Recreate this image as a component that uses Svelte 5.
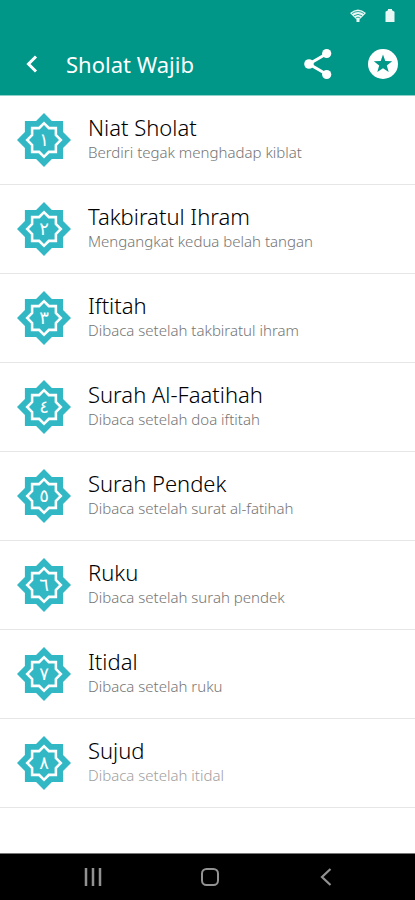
<script lang="ts">
	const title = 'Sholat Wajib';

	const items = [
		{ number: '١', name: 'Niat Sholat', description: 'Berdiri tegak menghadap kiblat' },
		{ number: '٢', name: 'Takbiratul Ihram', description: 'Mengangkat kedua belah tangan' },
		{ number: '٣', name: 'Iftitah', description: 'Dibaca setelah takbiratul ihram' },
		{ number: '٤', name: 'Surah Al-Faatihah', description: 'Dibaca setelah doa iftitah' },
		{ number: '٥', name: 'Surah Pendek', description: 'Dibaca setelah surat al-fatihah' },
		{ number: '٦', name: 'Ruku', description: 'Dibaca setelah surah pendek' },
		{ number: '٧', name: 'Itidal', description: 'Dibaca setelah ruku' },
		{ number: '٨', name: 'Sujud', description: 'Dibaca setelah itidal', faded: true }
	];

	// eight-pointed star made of two overlapping squares
	function star(radius: number) {
		const inner = radius * 0.765;
		const points = [];
		for (let i = 0; i < 16; i++) {
			const r = i % 2 ? inner : radius;
			const angle = (i * Math.PI) / 8;
			points.push(`${(r * Math.sin(angle)).toFixed(2)},${(-r * Math.cos(angle)).toFixed(2)}`);
		}
		return points.join(' ');
	}
</script>

<div class="screen">
	<header>
		<div class="status-bar">
			<svg width="16" height="13" viewBox="0 0 16 13" role="img" aria-label="Wi-Fi">
				<path d="M0 4 Q8 -3 16 4 L9.500 10.500V13h-3v-2.500Z" fill="#e6f7f4" />
				<path d="M2 4.600 Q8 .4 14 4.600 M4 6.800 Q8 3.800 12 6.800 M5.800 9 Q8 7.200 10.200 9" fill="none" stroke="#009688" stroke-width=".8" />
			</svg>
			<svg width="10" height="13" viewBox="0 0 10 13" role="img" aria-label="Battery">
				<path d="M3 0h4v1.2l2.500 1.500V13H.5V2.700L3 1.200z" fill="#e6f7f4" />
			</svg>
		</div>
		<div class="toolbar">
			<button class="back" aria-label="Back">
				<svg width="12" height="18" viewBox="0 0 12 18">
					<path d="M10 1.5 2.500 9l7.500 7.500" fill="none" stroke="#fff" stroke-width="3" />
				</svg>
			</button>
			<h1>{title}</h1>
			<button aria-label="Share">
				<svg width="28" height="32" viewBox="0 0 28 32">
					<path d="M23 5.500 5 16l18 10.500" fill="none" stroke="#fff" stroke-width="3" />
					<circle cx="22.700" cy="5.500" r="4.600" fill="#fff" />
					<circle cx="5" cy="16" r="4.800" fill="#fff" />
					<circle cx="22.700" cy="26.500" r="4.600" fill="#fff" />
				</svg>
			</button>
			<button aria-label="Favorite">
				<svg width="30" height="30" viewBox="0 0 30 30">
					<circle cx="15" cy="15" r="15" fill="#fff" />
					<path d="m15 5.500 2.300 6.400 6.900.3-5.400 4.200 1.900 6.600-5.700-3.800L9.300 23l1.900-6.600-5.400-4.200 6.900-.3z" fill="#009688" />
				</svg>
			</button>
		</div>
	</header>

	<main>
		<ul>
			{#each items as item}
				<li>
					<a href="#{item.name}">
						<svg class="badge" width="54" height="54" viewBox="-27 -27 54 54">
							<polygon points={star(27)} fill="#32b8c4" />
							<polygon points={star(18.6)} fill="#fff" />
							<polygon points={star(15)} fill="#32b8c4" />
							<text x="0" y="6" text-anchor="middle">{item.number}</text>
						</svg>
						<div class="text">
							<h2>{item.name}</h2>
							<p class:faded={item.faded}>{item.description}</p>
						</div>
					</a>
				</li>
			{/each}
		</ul>
	</main>

	<nav>
		<button aria-label="Recent apps">
			<svg width="18" height="18" viewBox="0 0 18 18">
				<path d="M2 0v18M9 0v18M16 0v18" stroke="#929292" stroke-width="2.5" />
			</svg>
		</button>
		<button aria-label="Home">
			<svg width="18" height="18" viewBox="0 0 18 18">
				<rect x="1" y="1" width="16" height="16" rx="4.5" fill="none" stroke="#929292" stroke-width="2" />
			</svg>
		</button>
		<button aria-label="Back">
			<svg width="18" height="18" viewBox="0 0 18 18">
				<path d="M13.5 1 5 9l8.5 8" fill="none" stroke="#929292" stroke-width="2.2" />
			</svg>
		</button>
	</nav>
</div>

<style>
	:global(body) {
		margin: 0;
		background: #fff;
	}

	.screen {
		display: flex;
		flex-direction: column;
		min-height: 100vh;
		font-family: 'Noto Sans', 'Open Sans', sans-serif;
		font-variant-ligatures: none;
	}

	button {
		display: flex;
		align-items: center;
		justify-content: center;
		padding: 0;
		border: none;
		background: none;
		cursor: pointer;
	}

	svg {
		display: block;
	}

	header {
		background: #009688;
		border-bottom: 1px solid #8fd0ca;
		color: #fff;
	}

	.status-bar {
		display: flex;
		justify-content: flex-end;
		gap: 19px;
		padding: 9px 20px 0 0;
		height: 24px;
	}

	.toolbar {
		display: flex;
		align-items: center;
		gap: 36px;
		height: 62px;
		padding: 0 17px 0 26px;
	}

	.back {
		margin-right: -8px;
	}

	h1 {
		flex: 1;
		margin: 0;
		font-size: 22px;
		font-weight: 400;
		line-height: 30px;
	}

	main {
		flex: 1;
	}

	ul {
		margin: 0;
		padding: 0;
		list-style: none;
	}

	li {
		border-bottom: 1px solid #e6e6e6;
	}

	a {
		display: flex;
		align-items: center;
		gap: 17px;
		height: 88px;
		padding: 0 17px;
		color: #000;
		text-decoration: none;
	}

	.badge {
		flex: none;
	}

	.badge text {
		fill: #fff;
		font-family: 'DejaVu Sans', sans-serif;
		font-size: 18px;
	}

	.text {
		padding-bottom: 4px;
	}

	h2 {
		margin: 0;
		font-size: 22px;
		font-weight: 300;
		line-height: 28px;
	}

	p {
		margin: 0;
		color: #757575;
		font-size: 15px;
		font-weight: 300;
		line-height: 22px;
	}

	p.faded {
		color: #a0a0a0;
	}

	nav {
		display: flex;
		align-items: center;
		justify-content: space-between;
		height: 46px;
		padding: 0 80px 0 84px;
		border-top: 1px solid #777;
		background: #000;
	}
</style>
